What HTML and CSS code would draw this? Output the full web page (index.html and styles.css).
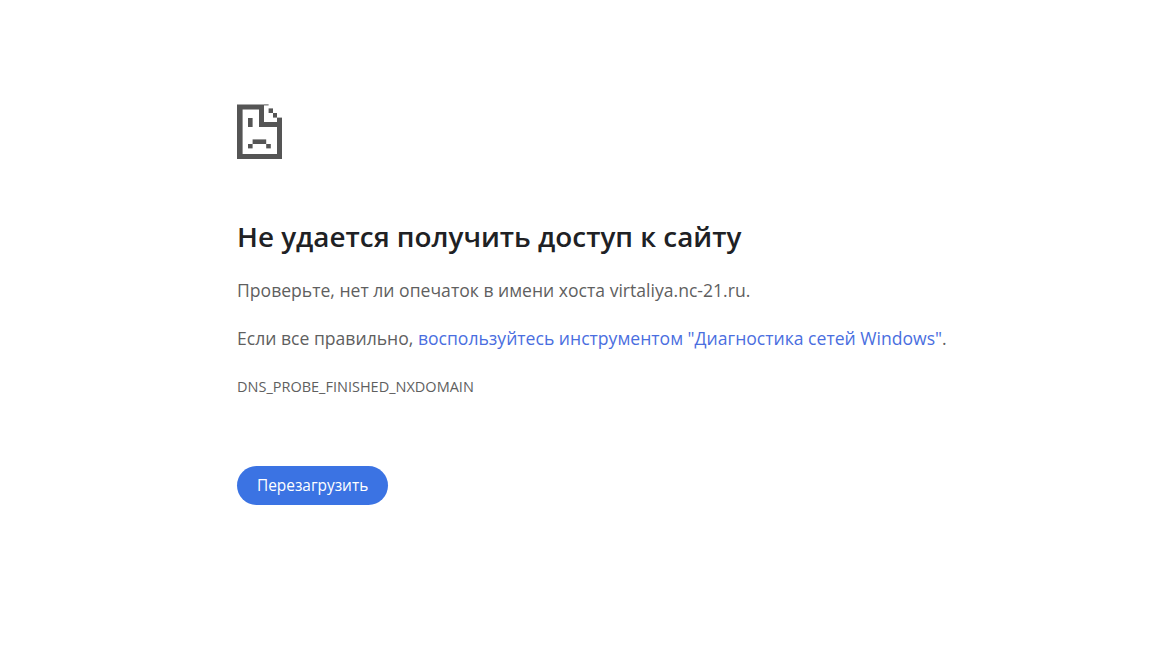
FILE: index.html
```html
<!DOCTYPE html>
<html lang="ru">
<head>
<meta charset="utf-8">
<title>virtaliya.nc-21.ru</title>
<link rel="stylesheet" href="styles.css">
</head>
<body>
<main class="wrapper">
  <svg class="sad-icon" width="45" height="55" viewBox="237 104 45 55" aria-hidden="true">
    <path class="ink" d="M237 104.4H264V122H282V159H237ZM242.6 109.6V154V154H277V127H259V109.6Z"/>
    <rect class="ink" x="264" y="104.4" width="4.6" height="1"/>
    <rect class="ink" x="268.6" y="108.4" width="4.4" height="4.6"/>
    <rect class="ink" x="273" y="113" width="4" height="4.6"/>
    <rect class="ink" x="277" y="117.6" width="5" height="4.4"/>
    <rect class="ink" x="248" y="118" width="4.6" height="9"/>
    <rect class="ink" x="252.6" y="139.4" width="13.6" height="4.6"/>
    <rect class="ink" x="248" y="144" width="4.6" height="4.4"/>
    <rect class="ink" x="266.2" y="144" width="4.6" height="4.4"/>
  </svg>
  <h1 class="title">Не удается получить доступ к сайту</h1>
  <p class="line">Проверьте, нет ли опечаток в имени хоста virtaliya.nc-21.ru.</p>
  <p class="line">Если все правильно, <a class="link" href="#">воспользуйтесь инструментом "Диагностика сетей Windows"</a>.</p>
  <p class="code">DNS_PROBE_FINISHED_NXDOMAIN</p>
  <button class="reload" type="button">Перезагрузить</button>
</main>
</body>
</html>
```
FILE: styles.css
```css
html, body {
  margin: 0;
  background: #fff;
}
body {
  font-family: "Open Sans", "Noto Sans", sans-serif;
  color: #5f5f5f;
}
.wrapper {
  padding: 104px 0 0 237px;
}
.sad-icon {
  display: block;
}
.ink {
  fill: #555555;
}
.title {
  margin: 58px 0 0;
  font-size: 27.85px;
  line-height: 38px;
  font-weight: 600;
  color: #202124;
}
.line {
  margin: 20px 0 0;
  font-size: 17.58px;
  line-height: 28px;
}
.title + .line {
  margin-top: 21px;
}
.link {
  color: #4a6ee0;
  text-decoration: none;
}
.code {
  margin: 25px 0 0;
  font-size: 14.5px;
  line-height: 20px;
}
.reload {
  display: block;
  margin: 69px 0 0;
  padding: 0 20px;
  height: 39px;
  border: 0;
  border-radius: 20px;
  background: #3b73e3;
  color: #fff;
  font-family: inherit;
  font-size: 15.4px;
}
```
